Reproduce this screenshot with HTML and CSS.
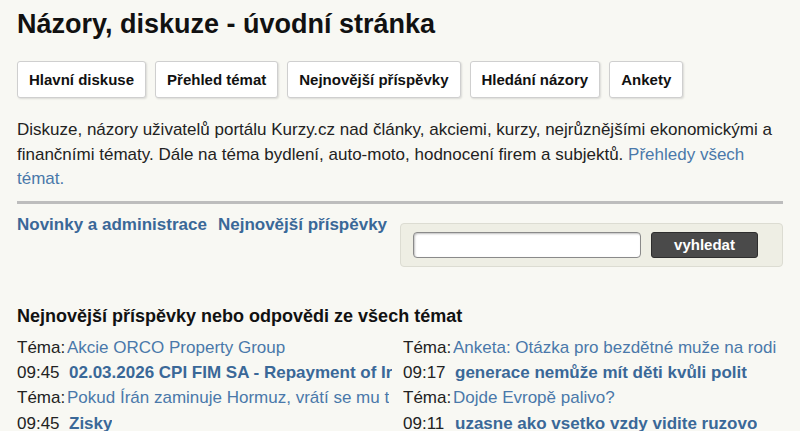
FILE: index.html
```html
<!DOCTYPE html>
<html lang="cs">
<head>
<meta charset="utf-8">
<title>Názory, diskuze - úvodní stránka</title>
<link rel="stylesheet" href="styles.css">
</head>
<body>
<div class="page">
  <h1 class="title">Názory, diskuze - úvodní stránka</h1>
  <nav class="tabs">
    <a class="tab" href="#">Hlavní diskuse</a>
    <a class="tab" href="#">Přehled témat</a>
    <a class="tab" href="#">Nejnovější příspěvky</a>
    <a class="tab" href="#">Hledání názory</a>
    <a class="tab" href="#">Ankety</a>
  </nav>
  <p class="intro">Diskuze, názory uživatelů portálu Kurzy.cz nad články, akciemi, kurzy, nejrůznějšími ekonomickými a finančními tématy. Dále na téma bydlení, auto-moto, hodnocení firem a subjektů. <a href="#" class="link">Přehledy všech témat.</a></p>
  <hr class="rule">
  <div class="toolbar">
    <div class="navlinks">
      <a href="#" class="blink">Novinky a administrace</a>
      <a href="#" class="blink">Nejnovější příspěvky</a>
    </div>
    <form class="search">
      <input class="search-input" type="text">
      <button class="search-btn" type="button">vyhledat</button>
    </form>
  </div>
  <h2 class="latest-title">Nejnovější příspěvky nebo odpovědi ze všech témat</h2>
  <div class="cols">
    <div class="col">
      <div class="row"><span class="lbl">Téma:</span><a href="#" class="link">Akcie ORCO Property Group</a></div>
      <div class="row"><span class="lbl">09:45</span><a href="#" class="blink">02.03.2026 CPI FIM SA - Repayment of Ir</a></div>
      <div class="row"><span class="lbl">Téma:</span><a href="#" class="link">Pokud Írán zaminuje Hormuz, vrátí se mu t</a></div>
      <div class="row"><span class="lbl">09:45</span><a href="#" class="blink">Zisky</a></div>
    </div>
    <div class="col">
      <div class="row"><span class="lbl">Téma:</span><a href="#" class="link">Anketa: Otázka pro bezdětné muže na rodi</a></div>
      <div class="row"><span class="lbl">09:17</span><a href="#" class="blink">generace nemůže mít děti kvůli polit</a></div>
      <div class="row"><span class="lbl">Téma:</span><a href="#" class="link">Dojde Evropě palivo?</a></div>
      <div class="row"><span class="lbl">09:11</span><a href="#" class="blink">uzasne ako vsetko vzdy vidite ruzovo</a></div>
    </div>
  </div>
</div>
</body>
</html>
```
FILE: styles.css
```css
html, body {
  margin: 0;
  padding: 0;
  background: #f8f8f3;
}
body {
  font-family: "Liberation Sans", Arial, sans-serif;
  color: #1e1e1e;
}
.page {
  padding: 7px 17px 0 17px;
}
.title {
  margin: 0;
  font-size: 27px;
  line-height: 34px;
  font-weight: bold;
  color: #111;
}
.tabs {
  display: flex;
  gap: 9px;
  margin-top: 20px;
}
.tab {
  display: block;
  height: 35px;
  line-height: 35px;
  padding: 0 11px;
  background: #fff;
  border: 1px solid #cfcfcf;
  border-radius: 3px;
  box-shadow: 1px 1px 2px rgba(0,0,0,0.12);
  font-size: 15px;
  font-weight: bold;
  color: #111;
  text-decoration: none;
}
.intro {
  margin: 20px 0 0 0;
  font-size: 17px;
  line-height: 24.5px;
  color: #222;
}
.link {
  color: #4a78aa;
  text-decoration: none;
}
.blink {
  color: #3a6898;
  font-weight: bold;
  text-decoration: none;
}
.rule {
  margin: 9px 0 0 0;
  border: 0;
  height: 3px;
  background: #bdbdbd;
}
.toolbar {
  display: flex;
  justify-content: space-between;
  align-items: flex-start;
  margin-top: 10px;
}
.navlinks {
  display: flex;
  gap: 11px;
  font-size: 17px;
  line-height: 22px;
}
.search {
  display: flex;
  align-items: center;
  gap: 10px;
  width: 383px;
  height: 44px;
  box-sizing: border-box;
  margin: 9px 0 0 0;
  padding: 0 12px;
  background: #eeeee4;
  border: 1px solid #dcdcd2;
  border-radius: 4px;
}
.search-input {
  width: 228px;
  height: 26px;
  box-sizing: border-box;
  margin: 0;
  border: 1px solid #8a8a8a;
  border-radius: 4px;
  background: #fff;
  box-shadow: inset 1px 1px 2px rgba(0,0,0,0.25);
}
.search-btn {
  width: 107px;
  height: 26px;
  margin: 0;
  padding: 0;
  background: #4a4a4a;
  border: 1px solid #2e2e2e;
  border-radius: 3px;
  color: #fff;
  font-family: "Liberation Sans", Arial, sans-serif;
  font-size: 15px;
  font-weight: bold;
}
.latest-title {
  margin: 38px 0 0 0;
  font-size: 18px;
  line-height: 22px;
  font-weight: bold;
  color: #111;
}
.cols {
  display: grid;
  grid-template-columns: 375px 1fr;
  gap: 11px;
  margin-top: 8px;
}
.col {
  overflow: hidden;
}
.row {
  display: flex;
  white-space: nowrap;
  font-size: 17px;
  line-height: 25.4px;
}
.lbl {
  flex: 0 0 50px;
  color: #222;
}
.row .blink {
  padding-left: 2px;
}
.row .blink,
.row .link {
  overflow: hidden;
}
```
